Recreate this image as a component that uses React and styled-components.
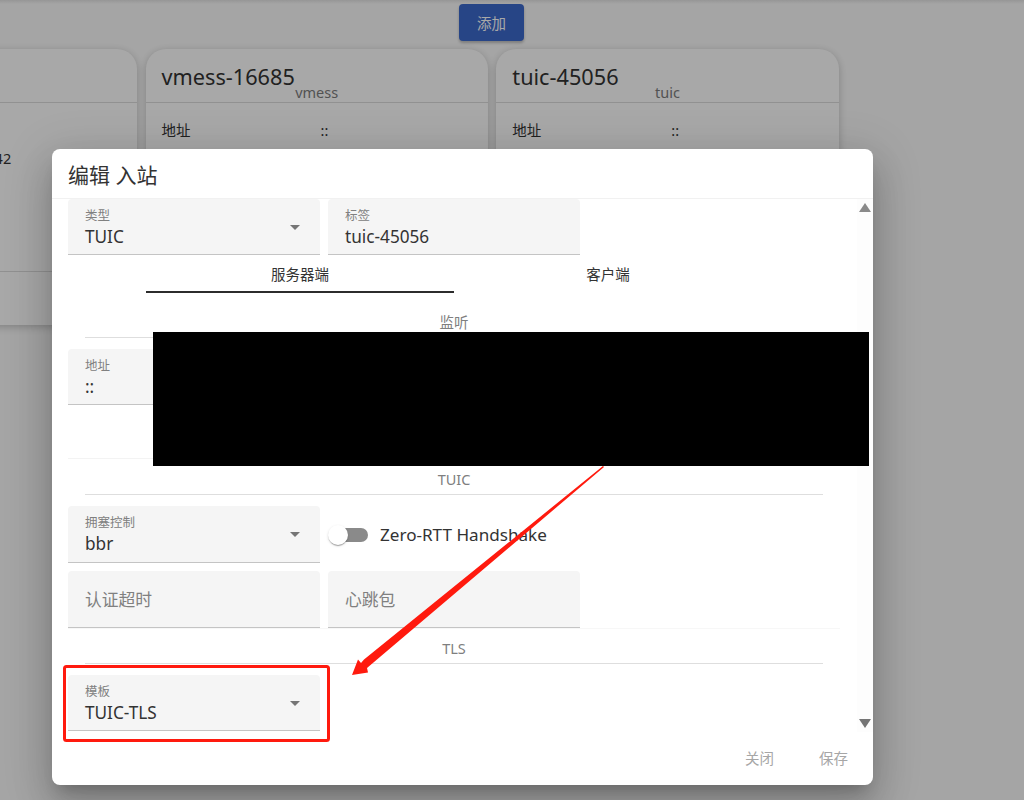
import React from "react";
import styled, { createGlobalStyle } from "styled-components";

const FONT = `"Noto Sans", "Open Sans", "Noto Sans CJK SC", sans-serif`;

const Global = createGlobalStyle`
  html, body {
    margin: 0;
    padding: 0;
    height: 800px;
    overflow: hidden;
    background: #fbfbfb;
    font-family: ${FONT};
  }
`;

const Page = styled.div`
  position: relative;
  width: 1024px;
  height: 800px;
  overflow: hidden;
`;

const TopShade = styled.div`
  height: 4px;
  background: linear-gradient(#e4e4e4, #fbfbfb);
`;

const Toolbar = styled.div`
  display: flex;
  padding-left: 459px;
`;

const AddButton = styled.button`
  width: 65px;
  height: 37px;
  border: 0;
  border-radius: 4px;
  background: #3c69cc;
  color: #fff;
  font: 14.5px ${FONT};
  box-shadow: 0 2px 3px rgba(0, 0, 0, 0.25);
`;

const CardRow = styled.div`
  display: flex;
  gap: 8.5px;
  margin: 8px 0 0 -205.3px;
`;

const Card = styled.div`
  flex: 0 0 342.3px;
  height: 276px;
  display: flex;
  flex-direction: column;
  background: #fff;
  border-radius: 20px 20px 4px 4px;
  box-shadow: 0 2px 8px rgba(0, 0, 0, 0.22);
  color: #333;
`;

const CardHead = styled.div`
  height: 54px;
  box-sizing: border-box;
  padding: 14px 16px 0;
  border-bottom: 1px solid #dcdcdc;
`;

const CardTitle = styled.div`
  font-size: 21.7px;
  line-height: 28px;
  white-space: nowrap;
`;

const CardType = styled.div`
  margin-top: -9px;
  text-align: center;
  font-size: 14.5px;
  line-height: 20px;
  color: #7d7d7d;
`;

const CardBody = styled.div`
  flex: 1;
  padding: 13px 16px 0;
`;

const InfoRow = styled.div`
  display: grid;
  grid-template-columns: 159px 1fr;
  font-size: 14.5px;
  line-height: 28px;
`;

const CardFoot = styled.div`
  height: 53px;
  border-top: 1px solid #dcdcdc;
`;

const Scrim = styled.div`
  position: absolute;
  inset: 0;
  display: flex;
  align-items: flex-start;
  padding: 149px 0 0 52px;
  background: rgba(0, 0, 0, 0.34);
`;

const Dialog = styled.div`
  width: 821px;
  height: 636px;
  display: flex;
  flex-direction: column;
  background: #fff;
  border-radius: 8px;
  box-shadow: 0 11px 15px -7px rgba(0, 0, 0, 0.2), 0 24px 38px 3px rgba(0, 0, 0, 0.14),
    0 9px 46px 8px rgba(0, 0, 0, 0.12);
  overflow: hidden;
`;

const DialogTitle = styled.div`
  height: 50px;
  box-sizing: border-box;
  padding: 10px 16px 0;
  font-size: 21px;
  line-height: 32px;
  color: #333;
  border-bottom: 1px solid #f1f1f1;
`;

const DialogMiddle = styled.div`
  height: 533px;
  display: flex;
`;

const DialogBody = styled.div`
  flex: 1;
  padding: 0 17px 0 16px;
`;

const FieldRow = styled.div`
  display: grid;
  grid-template-columns: 252px 252px;
  gap: 8px;
  margin-bottom: ${(p) => p.$gap || 0}px;
  box-shadow: ${(p) => (p.$faint ? "0 1px 0 #f7f7f7" : "none")};
`;

const Field = styled.div`
  height: ${(p) => p.$height || 56}px;
  box-sizing: border-box;
  display: flex;
  align-items: center;
  padding: 0 13px 0 17px;
  background: ${(p) => (p.$ghost ? "transparent" : "#f5f5f5")};
  border-bottom: 1px solid ${(p) => (p.$ghost ? "#f3f3f3" : "#c4c4c4")};
  border-radius: 4px 4px 0 0;
`;

const FieldText = styled.div`
  flex: 1;
  padding-top: 3px;
`;

const FieldLabel = styled.div`
  font-size: 12.5px;
  line-height: 16px;
  color: #808080;
`;

const FieldValue = styled.div`
  margin-top: 1px;
  font-size: 17.2px;
  line-height: 24px;
  color: #333;
`;

const Placeholder = styled.div`
  font-size: 16.8px;
  color: #808080;
`;

const Tabs = styled.div`
  display: flex;
  justify-content: center;
  height: 38px;
`;

const Tab = styled.div`
  width: 308px;
  box-sizing: border-box;
  padding-top: 9px;
  text-align: center;
  font-size: 14.5px;
  line-height: 20px;
  color: #333;
  border-bottom: 2px solid ${(p) => (p.$active ? "#2c2c2c" : "transparent")};
`;

const Section = styled.div`
  height: ${(p) => p.$height || 36}px;
  box-sizing: border-box;
  display: flex;
  align-items: flex-end;
  justify-content: center;
  margin: 0 17px 11px;
  padding-bottom: 5px;
  border-bottom: 1px solid #dedede;
  font-size: 14.5px;
  line-height: 20px;
  color: #7f7f7f;
`;

const SwitchCell = styled.label`
  display: flex;
  align-items: center;
  gap: 12px;
  padding-left: 6px;
  font-size: 17.1px;
  color: #333;
`;

const Track = styled.span`
  position: relative;
  width: 34px;
  height: 14px;
  border-radius: 7px;
  background: #8a8a8a;
`;

const Knob = styled.span`
  position: absolute;
  left: -6px;
  top: -3px;
  width: 20px;
  height: 20px;
  border-radius: 50%;
  background: #fff;
  box-shadow: 0 2px 1px -1px rgba(0, 0, 0, 0.2), 0 1px 1px rgba(0, 0, 0, 0.14), 0 1px 3px rgba(0, 0, 0, 0.12);
`;

const ScrollTrack = styled.div`
  width: 16px;
  display: flex;
  flex-direction: column;
  justify-content: space-between;
  align-items: center;
  padding: 4px 0 4px;
  box-sizing: border-box;
  background: #fdfdfd;
`;

const DialogFoot = styled.div`
  flex: 1;
  display: flex;
  justify-content: flex-end;
  align-items: flex-start;
  gap: 45px;
  padding: 16px 25px 0 0;
`;

const FootButton = styled.div`
  font-size: 14.5px;
  line-height: 20px;
  color: #a6a6a6;
`;

const Redaction = styled.div`
  position: absolute;
  left: 153px;
  top: 332px;
  width: 716px;
  height: 134px;
  background: #000;
`;

const Markup = styled.svg`
  position: absolute;
  left: 0;
  top: 0;
  pointer-events: none;
`;

const Caret = () => (
  <svg width="24" height="24" viewBox="0 0 24 24" fill="#757575">
    <path d="M7 10l5 5 5-5z" />
  </svg>
);

const SelectField = ({ label, value }) => (
  <Field>
    <FieldText>
      <FieldLabel>{label}</FieldLabel>
      <FieldValue>{value}</FieldValue>
    </FieldText>
    <Caret />
  </Field>
);

const TextField = ({ label, value }) => (
  <Field>
    <FieldText>
      <FieldLabel>{label}</FieldLabel>
      <FieldValue>{value}</FieldValue>
    </FieldText>
  </Field>
);

const cards = [
  { title: "trojan-12342", type: "trojan", port: "12342" },
  { title: "vmess-16685", type: "vmess", port: "16685" },
  { title: "tuic-45056", type: "tuic", port: "45056" },
];

export default function App() {
  return (
    <Page>
      <Global />
      <TopShade />
      <Toolbar>
        <AddButton>添加</AddButton>
      </Toolbar>
      <CardRow>
        {cards.map((c) => (
          <Card key={c.title}>
            <CardHead>
              <CardTitle>{c.title}</CardTitle>
              <CardType>{c.type}</CardType>
            </CardHead>
            <CardBody>
              <InfoRow>
                <span>地址</span>
                <span>::</span>
              </InfoRow>
              <InfoRow>
                <span>端口</span>
                <span>{c.port}</span>
              </InfoRow>
            </CardBody>
            <CardFoot />
          </Card>
        ))}
      </CardRow>

      <Scrim>
        <Dialog>
          <DialogTitle>编辑 入站</DialogTitle>
          <DialogMiddle>
            <DialogBody>
              <FieldRow>
                <SelectField label="类型" value="TUIC" />
                <TextField label="标签" value="tuic-45056" />
              </FieldRow>
              <Tabs>
                <Tab $active>服务器端</Tab>
                <Tab>客户端</Tab>
              </Tabs>
              <Section $height={45}>监听</Section>
              <FieldRow $gap={8}>
                <TextField label="地址" value="::" />
              </FieldRow>
              <FieldRow>
                <Field $ghost $height={46} />
              </FieldRow>
              <Section>TUIC</Section>
              <FieldRow $gap={8}>
                <Field $height={57}>
                  <FieldText>
                    <FieldLabel>拥塞控制</FieldLabel>
                    <FieldValue>bbr</FieldValue>
                  </FieldText>
                  <Caret />
                </Field>
                <SwitchCell>
                  <Track>
                    <Knob />
                  </Track>
                  Zero-RTT Handshake
                </SwitchCell>
              </FieldRow>
              <FieldRow $faint>
                <Field $height={57}>
                  <Placeholder>认证超时</Placeholder>
                </Field>
                <Field $height={57}>
                  <Placeholder>心跳包</Placeholder>
                </Field>
              </FieldRow>
              <Section>TLS</Section>
              <FieldRow>
                <SelectField label="模板" value="TUIC-TLS" />
              </FieldRow>
            </DialogBody>
            <ScrollTrack>
              <svg width="12" height="9" viewBox="0 0 12 9" fill="#8a8a8a">
                <path d="M6 0l6 9H0z" />
              </svg>
              <svg width="12" height="9" viewBox="0 0 12 9" fill="#757575">
                <path d="M0 0h12L6 9z" />
              </svg>
            </ScrollTrack>
          </DialogMiddle>
          <DialogFoot>
            <FootButton>关闭</FootButton>
            <FootButton>保存</FootButton>
          </DialogFoot>
        </Dialog>
      </Scrim>

      <Redaction />

      <Markup width="1024" height="800" viewBox="0 0 1024 800">
        <rect x="64.5" y="666.5" width="264" height="74" rx="2" fill="none" stroke="#ff1a0e" strokeWidth="3" />
        <path
          d="M603 466L604 467L370.5 665L367 668L368 672.5L352 675L358 659.5L361 663L364 659.5Z"
          fill="#ff1a0e"
        />
      </Markup>
    </Page>
  );
}
